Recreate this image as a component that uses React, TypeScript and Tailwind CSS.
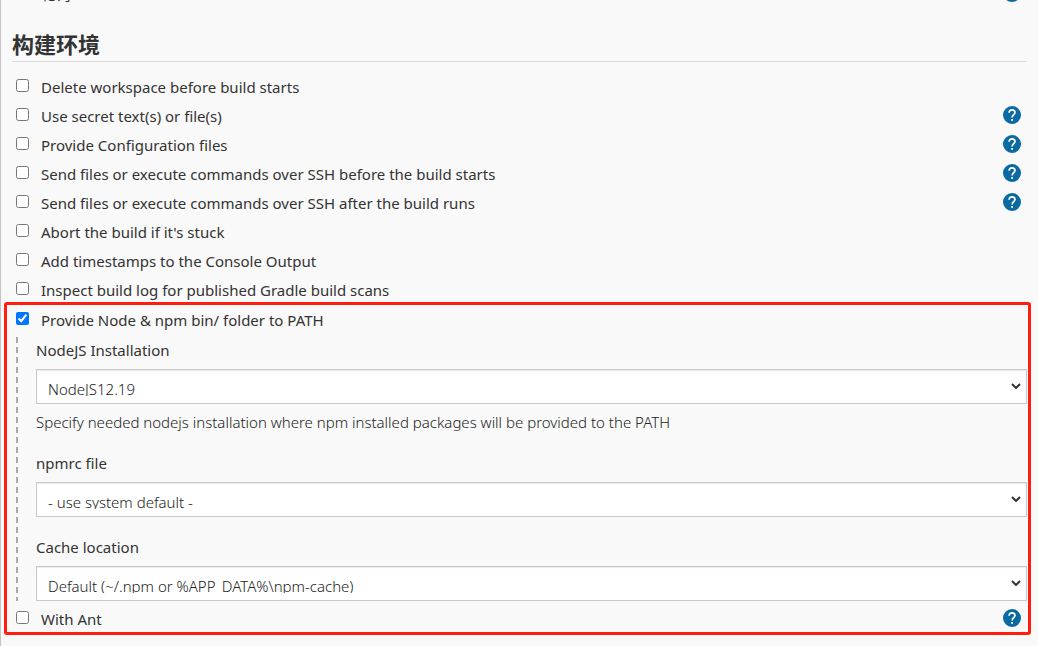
import { useId, useState } from 'react';

const HelpButton = ({ topic }: { topic: string }) => (
  <button type="button" aria-label={topic} className="shrink-0 rounded-full">
    <svg viewBox="0 0 18 18" className="block size-[18px]">
      <circle cx="9" cy="9" r="9" fill="#0b6aa2" />
      <path d="M6.1 6.8C6.1 4.9 7.3 3.8 9 3.8s3 1.1 3 2.7c0 2-2.9 2.3-2.9 5" fill="none" stroke="#fff" strokeWidth="1.7" />
      <rect x="8.2" y="13" width="1.8" height="1.8" fill="#fff" />
    </svg>
  </button>
);

type OptionProps = { label: string; help?: boolean; checked?: boolean };

const BuildOption = ({ label, help = false, checked = false }: OptionProps) => {
  const [on, setOn] = useState(checked);
  return (
    <div className="flex h-[29px] items-center justify-between pr-[6px]">
      <label className="mb-[2px] flex items-center gap-3 pl-1">
        <input
          type="checkbox"
          checked={on}
          onChange={(e) => setOn(e.target.checked)}
          className="mb-[2px] size-[13px]"
        />
        {label}
      </label>
      {help && (
        <div className="mb-1 flex">
          <HelpButton topic={label} />
        </div>
      )}
    </div>
  );
};

const SelectField = ({ label, options, hint }: { label: string; options: string[]; hint?: string }) => {
  const id = useId();
  return (
    <div>
      <label htmlFor={id} className="block h-[34px] pt-[5px]">
        {label}
      </label>
      <div className="relative">
        <select
          id={id}
          className="block h-[35px] w-full appearance-none border border-[#c8c8c8] bg-white pt-[9px] pr-8 pb-[7px] pl-[11px] font-light text-[#222] shadow-[inset_0_1px_1px_rgba(0,0,0,0.08)]"
        >
          {options.map((option) => (
            <option key={option}>{option}</option>
          ))}
        </select>
        <svg viewBox="0 0 10 6" className="pointer-events-none absolute top-[14px] right-[6px] h-[6px] w-[10px]">
          <path d="M1 1l4 4 4-4" fill="none" stroke="#333" strokeWidth="2" />
        </svg>
      </div>
      {hint && <p className="pt-2 pb-px font-light text-[#222]">{hint}</p>}
    </div>
  );
};

const options: OptionProps[] = [
  { label: 'Delete workspace before build starts' },
  { label: 'Use secret text(s) or file(s)', help: true },
  { label: 'Provide Configuration files', help: true },
  { label: 'Send files or execute commands over SSH before the build starts', help: true },
  { label: 'Send files or execute commands over SSH after the build runs', help: true },
  { label: "Abort the build if it's stuck" },
  { label: 'Add timestamps to the Console Output' },
  { label: 'Inspect build log for published Gradle build scans' },
];

export default function App() {
  return (
    <main className="min-h-screen overflow-hidden border-l border-[#c4c4c4] bg-[#f9f9f9] pr-[11px] pl-[11px] font-['Noto_Sans','Noto_Sans_CJK_SC',sans-serif] text-[15px] leading-5 text-[#333]">
      {/* Tail of the previous section */}
      <div className="-mt-4 flex items-end justify-between pr-[6px] pl-[29px]">
        <span className="leading-4">轮询 SCM</span>
        <HelpButton topic="轮询 SCM" />
      </div>

      <section className="pt-[30px]">
        <h2 className="mb-[11px] h-[30px] border-b border-[#dcdcdc] text-[22px] leading-6 font-bold">构建环境</h2>

        {options.map((option) => (
          <BuildOption key={option.label} {...option} />
        ))}

        <div className="relative mt-px">
          <BuildOption label="Provide Node & npm bin/ folder to PATH" checked />
          <div className="flex gap-[18px] pb-1 pl-1">
            <div className="mt-[2px] w-[2px] shrink-0 bg-[repeating-linear-gradient(to_bottom,#a9a9a9_0_6px,transparent_6px_10px)]" />
            <div className="flex min-w-0 flex-1 flex-col gap-[15px]">
              <SelectField
                label="NodeJS Installation"
                options={['NodeJS12.19']}
                hint="Specify needed nodejs installation where npm installed packages will be provided to the PATH"
              />
              <SelectField label="npmrc file" options={['- use system default -']} />
              <SelectField label="Cache location" options={['Default (~/.npm or %APP_DATA%\\npm-cache)']} />
            </div>
          </div>
          <BuildOption label="With Ant" help />

          {/* Highlight frame */}
          <div className="pointer-events-none absolute -top-1 -right-1 -bottom-px -left-2 rounded-[3px] border-3 border-[#ff1d10]" />
        </div>
      </section>
    </main>
  );
}
